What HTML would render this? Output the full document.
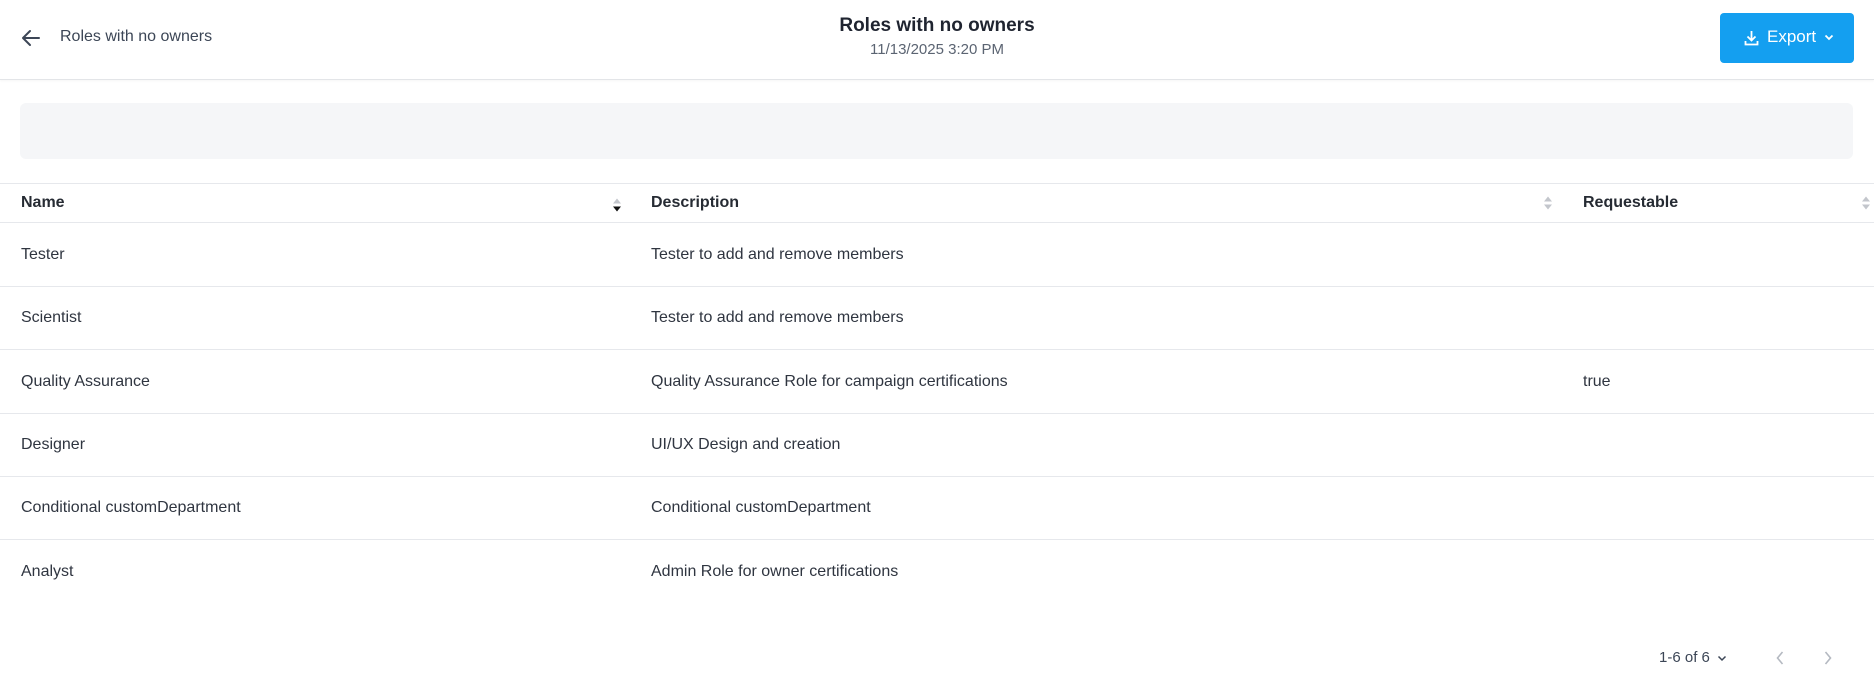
<!DOCTYPE html>
<html><head><meta charset="utf-8"><style>
*{box-sizing:border-box;margin:0;padding:0}
body{width:1874px;height:678px;background:#fff;font-family:"Liberation Sans",sans-serif;color:#2a2f36;position:relative;overflow:hidden}
.abs{position:absolute}
.hdr{left:0;top:0;width:1874px;height:80px;border-bottom:1px solid #e3e5e8;box-shadow:0 1px 2px rgba(0,0,0,0.04)}
.back{left:60px;top:28px;font-size:16px;color:#3c4656}
.title{left:0;width:1874px;text-align:center;top:15px;font-size:19px;font-weight:bold;color:#1f2430}
.date{left:0;width:1874px;text-align:center;top:41px;font-size:15px;color:#5b6472}
.btn{left:1720px;top:13px;width:134px;height:50px;background:#149ff0;border-radius:4px;color:#fff;font-size:17px}
.filter{left:20px;top:103px;width:1833px;height:56px;background:#f5f6f8;border-radius:6px}
.line{left:0;width:1874px;height:1px;background:#e6e8ec}
.th{font-size:16px;font-weight:bold;color:#262b33;top:194px}
.td{font-size:16px;color:#2f3540}
</style></head><body>
<div class="abs hdr"></div>
<svg class="abs" style="left:21px;top:29px" width="20" height="18" viewBox="0 0 20 18"><path d="M18 9H3M9 2L2 9l7 7" fill="none" stroke="#3c4656" stroke-width="2" stroke-linecap="round" stroke-linejoin="round"/></svg>
<div class="abs back">Roles with no owners</div>
<div class="abs title">Roles with no owners</div>
<div class="abs date">11/13/2025 3:20 PM</div>
<div class="abs btn">
<svg class="abs" style="left:24px;top:17px" width="15" height="16" viewBox="0 0 15 16"><path d="M7.5 1v9M3.5 6.5l4 4 4-4M1.5 11v3.5h12V11" fill="none" stroke="#fff" stroke-width="1.8"/></svg>
<span class="abs" style="left:47px;top:14px">Export</span>
<svg class="abs" style="left:104px;top:21px" width="10" height="7" viewBox="0 0 10 7"><path d="M1.5 1.5l3.5 3.5 3.5-3.5" fill="none" stroke="#fff" stroke-width="1.8"/></svg>
</div>
<div class="abs filter"></div>
<div class="abs line" style="top:183px"></div>
<div class="abs th" style="left:21px">Name</div>
<div class="abs th" style="left:651px">Description</div>
<div class="abs th" style="left:1583px">Requestable</div>
<svg class="abs" style="left:612px;top:197px" width="10" height="16" viewBox="0 0 10 16"><path d="M1 6.5L5 1.5 9 6.5z" fill="#c3c6cc"/><path d="M1 9.5L5 14.5 9 9.5z" fill="#111"/></svg>
<svg class="abs" style="left:1543px;top:195px" width="10" height="16" viewBox="0 0 10 16"><path d="M1 6.5L5 1.5 9 6.5z" fill="#c3c6cc"/><path d="M1 9.5L5 14.5 9 9.5z" fill="#c3c6cc"/></svg>
<svg class="abs" style="left:1861px;top:195px" width="10" height="16" viewBox="0 0 10 16"><path d="M1 6.5L5 1.5 9 6.5z" fill="#c3c6cc"/><path d="M1 9.5L5 14.5 9 9.5z" fill="#c3c6cc"/></svg>
<div class="abs line" style="top:222px"></div>

<div class="abs td" style="left:21px;top:246px">Tester</div>
<div class="abs td" style="left:651px;top:246px">Tester to add and remove members</div>
<div class="abs line" style="top:286px"></div>
<div class="abs td" style="left:21px;top:309px">Scientist</div>
<div class="abs td" style="left:651px;top:309px">Tester to add and remove members</div>
<div class="abs line" style="top:349px"></div>
<div class="abs td" style="left:21px;top:373px">Quality Assurance</div>
<div class="abs td" style="left:651px;top:373px">Quality Assurance Role for campaign certifications</div>
<div class="abs td" style="left:1583px;top:373px">true</div>
<div class="abs line" style="top:413px"></div>
<div class="abs td" style="left:21px;top:436px">Designer</div>
<div class="abs td" style="left:651px;top:436px">UI/UX Design and creation</div>
<div class="abs line" style="top:476px"></div>
<div class="abs td" style="left:21px;top:499px">Conditional customDepartment</div>
<div class="abs td" style="left:651px;top:499px">Conditional customDepartment</div>
<div class="abs line" style="top:539px"></div>
<div class="abs td" style="left:21px;top:563px">Analyst</div>
<div class="abs td" style="left:651px;top:563px">Admin Role for owner certifications</div>

<div class="abs td" style="left:1659px;top:649px;font-size:15px;color:#3c4656">1-6 of 6</div>
<svg class="abs" style="left:1717px;top:655px" width="10" height="7" viewBox="0 0 10 7"><path d="M1.5 1.5l3.5 3.5 3.5-3.5" fill="none" stroke="#3c4656" stroke-width="1.5"/></svg>
<svg class="abs" style="left:1775px;top:650px" width="10" height="16" viewBox="0 0 10 16"><path d="M7.5 2L2.5 8l5 6" fill="none" stroke="#b4b9c1" stroke-width="1.6"/></svg>
<svg class="abs" style="left:1823px;top:650px" width="10" height="16" viewBox="0 0 10 16"><path d="M2.5 2l5 6-5 6" fill="none" stroke="#b4b9c1" stroke-width="1.6"/></svg>
</body></html>
